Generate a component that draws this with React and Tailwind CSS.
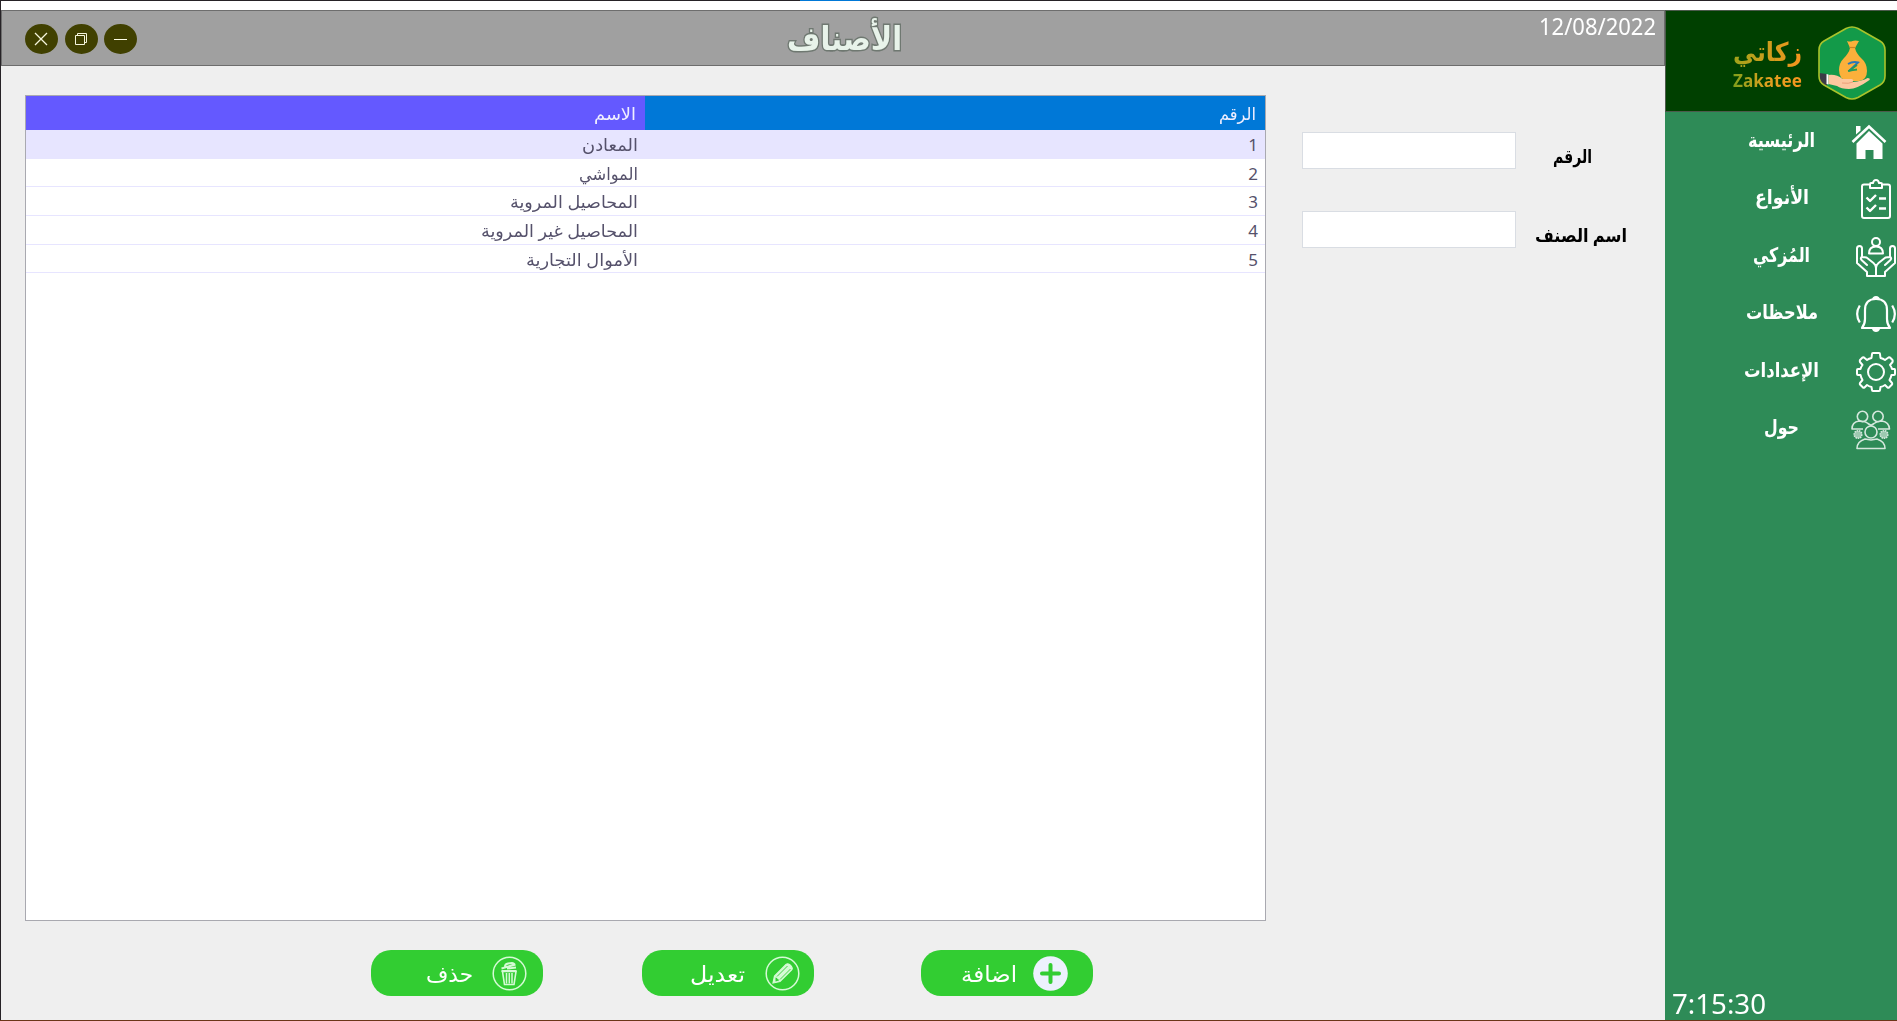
import React, { useLayoutEffect, useRef, useState } from "react";

// Stretches a single line of text so that it spans exactly the width of its box.
function Fit({ className = "", textClass = "", dir = "rtl", children }) {
  const box = useRef(null);
  const text = useRef(null);
  const [scale, setScale] = useState(1);
  useLayoutEffect(() => {
    setScale(box.current.offsetWidth / text.current.getBoundingClientRect().width);
  }, []);
  return (
    <div ref={box} dir="ltr" className={`flex shrink-0 ${className}`}>
      <span
        ref={text}
        dir={dir}
        className={`shrink-0 origin-left whitespace-nowrap ${textClass}`}
        style={{ transform: `scaleX(${scale})` }}
      >
        {children}
      </span>
    </div>
  );
}

const HomeIcon = () => (
  <svg className="h-9 w-9" viewBox="0 0 36 36" fill="#fff">
    <path d="M5 2h4.500v4.500L5 10.500z" />
    <path d="M1.500 18 18 2.500 34.500 18" fill="none" stroke="#fff" strokeWidth="2.600" />
    <path d="M18 7 31.500 19.500V35h-9v-9h-8v9h-9V19.500z" />
  </svg>
);
const ClipboardIcon = () => (
  <svg className="h-10 w-[30px]" viewBox="0 0 30 40" fill="none" stroke="#fff" strokeWidth="2" strokeLinejoin="round">
    <path d="M8 5.500H3Q1 5.500 1 7.500V37q0 2 2 2h24q2 0 2-2V7.500q0-2-2-2h-5" />
    <path d="M9 9V5q0-1 1-1h2Q12.500 1 15 1t3 3h2q1 0 1 1v4z" />
    <path d="m5.500 18.500 3.500 3.500 6-6M5.500 28.500l3.500 3.500 6-6M18 19.500h7M18 29.500h7" strokeWidth="2.400" />
  </svg>
);
const HandsIcon = () => (
  <svg className="h-10 w-10" viewBox="0 0 40 40" fill="none" stroke="#fff" strokeWidth="2" strokeLinejoin="round" strokeLinecap="round">
    <circle cx="20" cy="5" r="4" />
    <path d="M13 16.500q0-7 7-7t7 7z" />
    <path d="M11 39v-4L1 26V11.500q0-2.500 2.500-2.500T6 11.500V20l4.500.500 7 5.500q2.500 2 2.500 5v8zM6 20q-2 1-.500 3l5.500 5M11 39h18v-4l10-9V11.500Q39 9 36.500 9T34 11.500V20l-4.500.500-7 5.500q-2.500 2-2.500 5M34 20q2 1 .500 3L29 28" />
  </svg>
);
const BellIcon = () => (
  <svg className="h-9 w-10" viewBox="0 0 40 36" fill="none" stroke="#fff" strokeWidth="2.200">
    <path d="M6 32h28q-3-4-3-9V14Q31 3 20 3T9 14v9q0 5-3 9z" strokeLinejoin="round" />
    <path d="M16 3.500q.5-3.500 4-3.500t4 3.500zM16 33h8q-1 3-4 3t-4-3z" fill="#fff" stroke="none" />
    <path d="M3.800 9.500Q-1.500 18 3.800 26.500M36.200 9.500Q41.500 18 36.200 26.500" />
  </svg>
);
const GearIcon = () => (
  <svg className="h-10 w-10" viewBox="0 0 40 40" fill="none" stroke="#fff" strokeWidth="2" strokeLinejoin="round">
    <circle cx="20" cy="20" r="8" />
    <path d="M17 1h6q1 0 1 1l.5 4q2.500.5 4.500 2l3.500-2.500q1-.5 1.500 0l2.500 2.500q.5 1 0 2L34 13q1.500 2 2 4h2.500q.5 0 .5 1v4q0 1-1 1h-2.500q-.5 2.500-2 5l2.500 3q.5 1 0 1.500l-3 3q-.5.5-1.500 0L29 33q-2 1.500-4.500 2L24 38q0 1-1 1h-6q-1 0-1-1l-.5-3q-2.500-.5-4.500-2l-2.500 2.500q-1 .5-1.500 0l-3-3q-.5-.5 0-1.500l2.500-3q-1.500-2.500-2-5H2q-1 0-1-1v-4q0-1 1-1h2.500q.5-2 2-4L4 10q-.5-1 0-2l2.500-2.500q.5-.5 1.500 0L11 8q2-1.500 4.500-2L16 2q0-1 1-1z" />
  </svg>
);
const TeamIcon = () => (
  <svg className="mt-0.5 h-10 w-10" viewBox="0 0 40 40" fill="none" stroke="#fff" strokeWidth="1.600" strokeLinejoin="round" opacity=".8">
    <circle cx="11.500" cy="6.500" r="5.200" />
    <circle cx="27" cy="6.500" r="5.200" />
    <path d="M12 19H1q0-7 7-8 6 0 9 2.500l3 2 3-2q3-2.500 8-2.500 7 1 7.500 8H27" />
    <circle cx="20" cy="22" r="6" />
    <path d="M6 38.500q0-7 8-9.500l6 1 6-1q8 2.500 8 9.500z" />
    <circle cx="7" cy="24.500" r="3.800" fill="#ffffffaa" strokeDasharray="1.500 .8" />
    <circle cx="33" cy="24.500" r="3.800" fill="#ffffffaa" strokeDasharray="1.500 .8" />
  </svg>
);

const menu = [
  { label: "الرئيسية", box: "ml-[83px] w-[67px]", gap: "ml-9", Icon: HomeIcon },
  { label: "الأنواع", box: "ml-[90px] w-[54px]", gap: "ml-[52px]", Icon: ClipboardIcon },
  { label: "المُزكي", box: "ml-[88px] w-[57px]", gap: "ml-[46px]", Icon: HandsIcon },
  { label: "ملاحظات", box: "ml-[81px] w-[72px]", gap: "ml-[38px]", Icon: BellIcon },
  { label: "الإعدادات", box: "ml-[79px] w-[75px]", gap: "ml-[37px]", Icon: GearIcon },
  { label: "حول", box: "ml-[99px] w-[35px]", gap: "ml-[52px]", Icon: TeamIcon },
];

const rows = [
  { id: 1, name: "المعادن", w: "w-[56px]" },
  { id: 2, name: "المواشي", w: "w-[59px]" },
  { id: 3, name: "المحاصيل المروية", w: "w-[128px]" },
  { id: 4, name: "المحاصيل غير المروية", w: "w-[157px]" },
  { id: 5, name: "الأموال التجارية", w: "w-[112px]" },
];

function Logo() {
  return (
    <svg className="mt-[15px] ml-4 h-[74px] w-[68px]" viewBox="0 0 68 74">
      <defs>
        <clipPath id="hex">
          <path d="M28 2.500q6-3 12 0l22 12.500q5 3 5 9v26q0 6-5 9L40 71.500q-6 3-12 0L6 59q-5-3-5-9V24q0-6 5-9z" />
        </clipPath>
      </defs>
      <g clipPath="url(#hex)">
        <path d="M0 0h68v74H0z" fill="#139a49" />
        <path d="M0 47l9 1v12l-9-2z" fill="#3b3b46" />
        <path d="M8.500 48l2 .5v10l-2-.5z" fill="#fff" />
      </g>
      <path d="M28 2.500q6-3 12 0l22 12.500q5 3 5 9v26q0 6-5 9L40 71.500q-6 3-12 0L6 59q-5-3-5-9V24q0-6 5-9z" fill="none" stroke="#a9c32b" strokeWidth="1.600" />
      <path d="M29 15q3 1 5.500 0t6.500 0l-4 7q1 5 6 10 6 5 6 13 0 9-8 10H30q-9-1-9-11 0-7 5-12t6-10z" fill="#fbb03b" />
      <path d="M31.500 21.500h6" stroke="#c98324" strokeWidth="1.200" />
      <path d="M30 38q5-3 10-1.500L31 45" fill="none" stroke="#2877b8" strokeWidth="2" />
      <path d="m31 45 8-6m-9 6q5-1 9-1.500" fill="none" stroke="#239b56" strokeWidth="1.800" />
      <path d="M10.500 49q8-1 14 4h9q3 1 1 3 10-1 15-4 3 0 2 2Q39 63 31 63q-8 0-12-3l-8.500-2z" fill="#fcc79f" />
      <path d="M24 57q7 1 11-1" fill="none" stroke="#ec9f79" />
    </svg>
  );
}

const PlusCircle = () => (
  <svg className="h-[35px] w-[35px]" viewBox="0 0 35 35">
    <circle cx="17.500" cy="17.500" r="17.300" fill="#ecf1fd" />
    <path d="M17.500 9v17M9 17.500h17" stroke="#32cd32" strokeWidth="4" strokeLinecap="round" />
  </svg>
);
const PencilCircle = () => (
  <svg className="h-[35px] w-[35px]" viewBox="0 0 35 35" fill="none" stroke="#d5fad5">
    <circle cx="17.500" cy="17.500" r="16.300" strokeWidth="1.500" />
    <path d="m8 27 1.500-7L21 8.500q1.500-1.500 3.500 0l2 2q1.500 2 0 3.500L15 25.500z" fill="#d5fad5" strokeWidth="1.200" />
    <path d="M12 20.500 22.500 10M15 23.500 25.500 13" stroke="#32cd32" strokeWidth=".9" />
    <path d="M10.500 21.500q2 0 2 1.500 1.500 0 1.500 1.500l-3.500 1z" fill="#32cd32" stroke="none" />
  </svg>
);
const TrashCircle = () => (
  <svg className="h-[35px] w-[35px]" viewBox="0 0 35 35" fill="none" stroke="#d5fad5">
    <circle cx="17.500" cy="17.500" r="16.300" strokeWidth="1.500" />
    <path d="M10.500 15.500h13.500L22 28.500H12.500z" strokeWidth="1.600" />
    <path d="M14.500 17v10.500M17.300 17v10.500M20 17v10.500" strokeWidth="1.500" />
    <path d="M9.500 15h15M9.500 12.500 23.500 8.500M13 10.500q0-2.500 3-3l4-.5q2 0 2.500 2M15 12.500l9-1" strokeWidth="2" />
  </svg>
);

function ActionButton({ className, label, text, icon }) {
  return (
    <button className={`flex h-[46px] w-[172px] shrink-0 items-center rounded-[20px] bg-[#32cd32] ${className}`}>
      <Fit className={text} textClass="text-[22px] leading-[48px] text-white">{label}</Fit>
      {icon}
    </button>
  );
}

export default function App() {
  return (
    <div className="flex h-[1021px] w-[1897px] flex-col overflow-hidden border-b border-[#6b3518] bg-[#efefef] font-['Noto_Sans','DejaVu_Sans',sans-serif]">
      <div className="flex h-px shrink-0 bg-[#262226]">
        <div className="ml-[800px] w-[60px] bg-[#0078d7]" />
      </div>
      <div className="h-[9px] shrink-0 border-l border-[#262226] bg-white" />
      <div className="flex min-h-0 flex-1">
        <main className="flex w-[1665px] flex-col border-l border-[#262226]">
          <header className="flex h-14 shrink-0 border border-[#6d6d6d] bg-[#a0a0a0]">
            <div className="mt-[13px] ml-[23px] flex h-[30px] gap-[7px]">
              <button className="flex h-[30px] w-[33px] items-center justify-center rounded-[50%] bg-[#404000] pr-px">
                <svg className="h-[14px] w-[14px]" viewBox="0 0 14 14"><path d="m1 1 12 12M13 1 1 13" stroke="#f5f5dc" strokeWidth="1.300" /></svg>
              </button>
              <button className="flex h-[30px] w-[33px] items-center justify-center rounded-[50%] bg-[#404000] pr-px">
                <svg className="h-[14px] w-[14px]" viewBox="0 0 14 14" fill="none" stroke="#f5f5dc"><path d="M1.500 3.500h9v9h-9zM3.500 3.500v-2h9v9h-2" /></svg>
              </button>
              <button className="-ml-px flex h-[30px] w-[33px] items-center justify-center rounded-[50%] bg-[#404000] pr-px">
                <span className="h-px w-[13px] bg-[#ffffe8]" />
              </button>
            </div>
            <Fit
              className="ml-[650px] w-[115px]"
              textClass="text-[33px] leading-[54px] font-bold text-[#e8f3ea] [-webkit-text-stroke:3px_#6f7871] [paint-order:stroke_fill]"
            >
              الأصناف
            </Fit>
            <Fit dir="ltr" className="ml-auto mr-2 h-8 w-[117px]" textClass="text-2xl leading-[29px] text-white">12/08/2022</Fit>
          </header>

          <div className="flex h-[855px] shrink-0 pt-[29px] pl-6">
            <div className="flex h-[826px] w-[1241px] shrink-0 flex-col border border-[#a9a9b0] bg-white">
              <div className="flex h-[34px] shrink-0 text-[17px] leading-[36px] text-[#f0efff]">
                <div className="flex w-[619px] justify-end bg-[#6459ff] pr-[9px]">
                  <Fit className="w-[42px]">الاسم</Fit>
                </div>
                <div className="flex flex-1 justify-end bg-[#0078d7] pr-[9px]">
                  <Fit className="w-[37px]">الرقم</Fit>
                </div>
              </div>
              {rows.map((r) => (
                <div
                  key={r.id}
                  className={`flex h-[28.7px] shrink-0 border-b border-[#e7e5ff] text-[17px] leading-[30px] text-[#55516b] ${r.id === 1 ? "bg-[#e7e5ff]" : ""}`}
                >
                  <div className="flex w-[619px] justify-end pr-[7px]"><Fit className={r.w}>{r.name}</Fit></div>
                  <div className="flex-1 pr-[7px] text-right">{r.id}</div>
                </div>
              ))}
            </div>
            <form className="ml-9 flex flex-col gap-[42px] pt-[37px]">
              <div className="flex h-[37px] items-start">
                <input className="h-[37px] w-[214px] border border-[#d9dde3] bg-white px-2" />
                <Fit className="ml-[37px] w-[39px]" textClass="text-[18.500px] leading-[47px] font-bold text-black">الرقم</Fit>
              </div>
              <div className="flex h-[37px] items-start">
                <input className="h-[37px] w-[214px] border border-[#d9dde3] bg-white px-2" />
                <Fit className="ml-[19px] w-[92px]" textClass="text-[18.500px] leading-[48px] font-bold text-black">اسم الصنف</Fit>
              </div>
            </form>
          </div>

          <div className="mt-[29px] flex pl-[370px]">
            <ActionButton className="" label="حذف" text="ml-[55px] mr-[19px] w-[47px]" icon={<TrashCircle />} />
            <ActionButton className="ml-[99px]" label="تعديل" text="ml-[48px] mr-5 w-[55px]" icon={<PencilCircle />} />
            <ActionButton className="ml-[107px]" label="اضافة" text="ml-[40px] mr-4 w-[56px]" icon={<PlusCircle />} />
          </div>
        </main>

        <aside className="flex w-[232px] shrink-0 flex-col bg-[#2e8b57]">
          <div className="flex h-[102px] shrink-0 border border-r-0 border-[#4c5a4c] bg-[#004000]">
            <div className="ml-[67px] flex w-[69px] flex-col pt-[21px]">
              <Fit className="h-[38px] w-[69px]" textClass="bg-gradient-to-r from-[#a0a31b] to-[#f7941e] bg-clip-text text-[26px] leading-[38px] font-bold text-transparent">زكاتي</Fit>
              <Fit dir="ltr" className="h-5 w-[69px]" textClass="bg-gradient-to-r from-[#7f9e1b] via-[#e0a01f] to-[#f7941e] bg-clip-text text-[18px] leading-5 font-bold text-transparent">Zakatee</Fit>
            </div>
            <Logo />
          </div>
          <nav className="flex flex-col pt-px">
            {menu.map(({ label, box, gap, Icon }) => (
              <a key={label} className="flex h-[57.500px] items-center">
                <Fit className={`-mt-1 ${box}`} textClass="text-[20px] leading-[30px] font-bold text-white">{label}</Fit>
                <div className={gap}><Icon /></div>
              </a>
            ))}
          </nav>
          <Fit dir="ltr" className="mt-auto ml-[7px] h-8 w-[94px]" textClass="text-[27.500px] leading-8 text-white">7:15:30</Fit>
        </aside>
      </div>
    </div>
  );
}
